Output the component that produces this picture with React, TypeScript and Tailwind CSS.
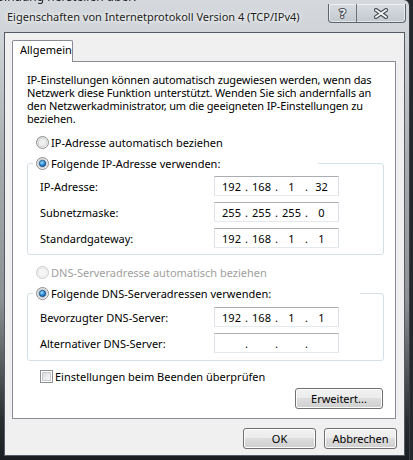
import React from "react";

type IpParts = [string, string, string, string];

function RadioDot({ checked = false, disabled = false }: { checked?: boolean; disabled?: boolean }) {
  const id = checked ? "rad-on" : disabled ? "rad-off-dis" : "rad-off";
  return (
    <svg width="13" height="13" viewBox="0 0 13 13" className="shrink-0">
      <defs>
        <linearGradient id={`${id}-bg`} x1="0" y1="0" x2="1" y2="1">
          <stop offset="0" stopColor={disabled ? "#f0f0f0" : "#d6d8dc"} />
          <stop offset="1" stopColor={disabled ? "#fafafa" : "#ffffff"} />
        </linearGradient>
        <radialGradient id={`${id}-dot`} cx="0.4" cy="0.35" r="0.7">
          <stop offset="0" stopColor="#9fe2ff" />
          <stop offset="0.55" stopColor="#2f8fdc" />
          <stop offset="1" stopColor="#0c4a8a" />
        </radialGradient>
      </defs>
      <circle cx="6.5" cy="6.5" r="6" fill={`url(#${id}-bg)`} stroke={disabled ? "#c9cacc" : "#8e8f8f"} />
      <circle cx="6.5" cy="6.5" r="4.3" fill={disabled ? "#f6f6f6" : "#eeeeef"} stroke={disabled ? "#e2e2e2" : "#c7c9cc"} strokeWidth="0.8" />
      {checked && <circle cx="6.5" cy="6.5" r="3.2" fill={`url(#${id}-dot)`} stroke="#1d4f7d" strokeWidth="0.8" />}
    </svg>
  );
}

function CheckBox() {
  return (
    <div className="flex h-[13px] w-[13px] shrink-0 items-center justify-center border border-[#8e8f8f] bg-white">
      <div className="h-[9px] w-[9px] border border-[#c9cbce] bg-gradient-to-br from-[#d9dbde] to-[#f8f8f8]" />
    </div>
  );
}

function IpField({ parts }: { parts: IpParts }) {
  return (
    <div className="flex h-[20px] w-[125px] items-center rounded-[1px] border border-[#abadb3] border-b-[#e3e9ef] border-l-[#e2e3ea] border-r-[#dbdfe6] bg-white pl-[2px]">
      {parts.map((p, i) => (
        <React.Fragment key={i}>
          <span className="w-[29px] text-center">{p}</span>
          {i < 3 && <span className="flex w-[1px] justify-center">.</span>}
        </React.Fragment>
      ))}
    </div>
  );
}

function FieldRow({ label, parts }: { label: string; parts: IpParts }) {
  return (
    <div className="flex h-[20px] items-center">
      <span className="w-[174px]">{label}</span>
      <IpField parts={parts} />
    </div>
  );
}

function WinButton({ label, className = "" }: { label: string; className?: string }) {
  return (
    <div
      className={`flex h-[21px] items-center justify-center rounded-[3px] border border-[#707070] bg-[linear-gradient(#f2f2f2_0%,#ebebeb_50%,#dddddd_50%,#cfcfcf_100%)] shadow-[inset_0_0_0_1px_#fcfcfc] ${className}`}
    >
      {label}
    </div>
  );
}

function GroupBox({
  legend,
  legendWidth,
  height,
  children,
}: {
  legend: string;
  legendWidth: string;
  height: string;
  children: React.ReactNode;
}) {
  return (
    <div className={`relative ml-[14px] mt-[14px] w-[357px] rounded-[3px] border border-[#d5dfe5] ${height}`}>
      <div className={`absolute left-[5px] top-[-7px] flex h-[13px] items-center gap-[2px] bg-white pl-[3px] ${legendWidth}`}>
        <RadioDot checked />
        <span>{legend}</span>
      </div>
      {children}
    </div>
  );
}

export default function App() {
  return (
    <div className="relative h-[460px] w-[413px] overflow-hidden bg-[#25292e] font-['Noto_Sans',sans-serif] text-[11px] leading-[13px] text-black">
      {/* window frame */}
      <div className="flex h-full w-[410px] flex-col rounded-tr-[6px] border-r border-[#3a3e43] bg-[linear-gradient(180deg,#d5d9dd_0px,#cfd3d7_40px,#a8acb1_160px,#8d9196_300px,#2a2e33_420px,#1a1d21_460px)] pl-[4px]">
        {/* title bar */}
        <div className="relative flex h-[32px] items-start">
          <span className="pointer-events-none absolute left-[-26px] top-[-10px] whitespace-nowrap text-[12px] text-[#24282d] blur-[0.4px]">
            Verbindung herstellen über:
          </span>
          <span className="mt-[10px] pl-[3px] text-[#1b1d20] [text-shadow:0_0_6px_#ffffff,0_0_3px_#ffffff]">
            Eigenschaften von Internetprotokoll Version 4 (TCP/IPv4)
          </span>
          <div className="ml-auto mr-[3px] mt-[4px] flex h-[19px] rounded-b-[4px] border border-t-0 border-[#5d636b] bg-[linear-gradient(#d9dde2,#c3c8ce)] shadow-[inset_0_0_0_1px_rgba(255,255,255,0.55)]">
            <div className="flex w-[28px] items-center justify-center border-r border-[#6d737b]">
              <span className="text-[13px] font-bold leading-none text-[#eef0f2] [-webkit-text-stroke:2px_#4b5058] [paint-order:stroke_fill]">
                ?
              </span>
            </div>
            <div className="flex w-[48px] items-center justify-center">
              <svg width="14" height="11" viewBox="0 0 14 11">
                <path d="M2 2 L12 9 M12 2 L2 9" stroke="#454a51" strokeWidth="4" strokeLinecap="square" />
                <path d="M2 2 L12 9 M12 2 L2 9" stroke="#f3f4f6" strokeWidth="1.8" strokeLinecap="square" />
              </svg>
            </div>
          </div>
        </div>

        {/* client area */}
        <div className="flex h-[424px] w-[401px] flex-col border border-[#555b63] bg-[#f0f0f0]">
          <div className="ml-[7px] mt-[7px] flex">
            <div className="relative z-10 h-[22px] w-[61px] rounded-t-[2px] border border-b-0 border-[#898c95] bg-white pl-[7px] pt-[2px]">
              Allgemein
            </div>
          </div>

          <div className="-mt-[1px] ml-[7px] flex h-[358px] w-[384px] flex-col border border-[#898c95] bg-white">
            <p className="ml-[14px] mt-[11px] tracking-[-0.15px]">
              <span className="block whitespace-nowrap">IP-Einstellungen können automatisch zugewiesen werden, wenn das</span>
              <span className="block whitespace-nowrap">Netzwerk diese Funktion unterstützt. Wenden Sie sich andernfalls an</span>
              <span className="block whitespace-nowrap">den Netzwerkadministrator, um die geeigneten IP-Einstellungen zu</span>
              <span className="block whitespace-nowrap">beziehen.</span>
            </p>

            <div className="ml-[23px] mt-[11px] flex h-[13px] items-center gap-[2px]">
              <RadioDot />
              <span>IP-Adresse automatisch beziehen</span>
            </div>

            <GroupBox legend="Folgende IP-Adresse verwenden:" legendWidth="w-[285px]" height="h-[92px]">
              <div className="flex flex-col gap-[6px] pl-[12px] pt-[12px]">
                <FieldRow label="IP-Adresse:" parts={["192", "168", "1", "32"]} />
                <FieldRow label="Subnetzmaske:" parts={["255", "255", "255", "0"]} />
                <FieldRow label="Standardgateway:" parts={["192", "168", "1", "1"]} />
              </div>
            </GroupBox>

            <div className="ml-[23px] mt-[11px] flex h-[13px] items-center gap-[2px] text-[#a0a0a0]">
              <RadioDot disabled />
              <span>DNS-Serveradresse automatisch beziehen</span>
            </div>

            <GroupBox legend="Folgende DNS-Serveradressen verwenden:" legendWidth="w-[327px]" height="h-[68px]">
              <div className="flex flex-col gap-[6px] pl-[12px] pt-[13px]">
                <FieldRow label="Bevorzugter DNS-Server:" parts={["192", "168", "1", "1"]} />
                <FieldRow label="Alternativer DNS-Server:" parts={["", "", "", ""]} />
              </div>
            </GroupBox>

            <div className="ml-[27px] mt-[9px] flex h-[13px] items-center gap-[2px]">
              <CheckBox />
              <span>Einstellungen beim Beenden überprüfen</span>
            </div>

            <div className="mr-[12px] mt-[5px] flex justify-end">
              <WinButton label="Erweitert..." className="w-[88px]" />
            </div>
          </div>

          <div className="mr-[7px] mt-[9px] flex justify-end gap-[8px]">
            <WinButton label="OK" className="w-[73px]" />
            <WinButton label="Abbrechen" className="w-[73px]" />
          </div>
        </div>
      </div>
    </div>
  );
}
